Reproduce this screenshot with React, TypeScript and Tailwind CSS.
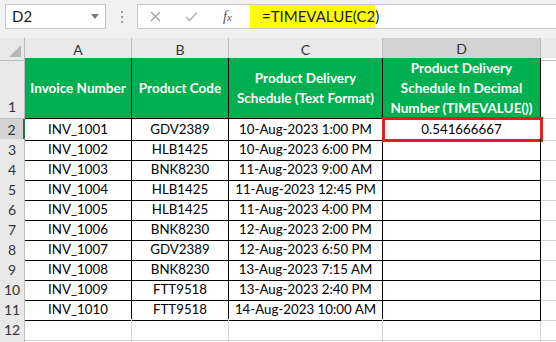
import React from "react";

const rows: [string, string, string][] = [
  ["INV_1001", "GDV2389", "10-Aug-2023 1:00 PM"],
  ["INV_1002", "HLB1425", "10-Aug-2023 6:00 PM"],
  ["INV_1003", "BNK8230", "11-Aug-2023 9:00 AM"],
  ["INV_1004", "HLB1425", "11-Aug-2023 12:45 PM"],
  ["INV_1005", "HLB1425", "11-Aug-2023 4:00 PM"],
  ["INV_1006", "BNK8230", "12-Aug-2023 2:00 PM"],
  ["INV_1007", "GDV2389", "12-Aug-2023 6:50 PM"],
  ["INV_1008", "BNK8230", "13-Aug-2023 7:15 AM"],
  ["INV_1009", "FTT9518", "13-Aug-2023 2:40 PM"],
  ["INV_1010", "FTT9518", "14-Aug-2023 10:00 AM"],
];

const font = { fontFamily: "Lato, 'Open Sans', sans-serif" };

export default function App() {
  const cols = "grid grid-cols-[25px_107px_97px_154px_158px_1fr]";
  return (
    <div className="w-[556px] h-[342px] overflow-hidden bg-white text-black" style={font}>
      {/* toolbar */}
      <div className="h-[38px] bg-[#f1f1f1] flex items-start pt-[4px]">
        <div className="ml-[5px] w-[101px] h-[25px] bg-white border border-[#c8c8c8] flex items-center justify-between pl-[6px] pr-[6px] text-[15px] text-[#222]">
          <span>D2</span>
          <svg width="8" height="5" viewBox="0 0 8 5"><path d="M0 0 L8 0 L4 5 Z" fill="#777" /></svg>
        </div>
        <div className="w-[31px] h-[25px] flex flex-col items-center justify-center gap-[3px]">
          <span className="w-[2px] h-[2px] bg-[#9a9a9a]" />
          <span className="w-[2px] h-[2px] bg-[#9a9a9a]" />
          <span className="w-[2px] h-[2px] bg-[#9a9a9a]" />
        </div>
        <div className="flex-1 h-[25px] bg-white border border-[#c8c8c8] border-r-0 flex items-stretch">
          <div className="w-[112px] flex items-center">
            <svg className="ml-[12px]" width="11" height="11" viewBox="0 0 11 11"><path d="M1 1 L10 10 M10 1 L1 10" stroke="#a0a0a0" strokeWidth="1.3" /></svg>
            <svg className="ml-[24px]" width="13" height="11" viewBox="0 0 13 11"><path d="M1 6 L4.5 9.5 L12 1.5" stroke="#b0b0b0" strokeWidth="1.4" fill="none" /></svg>
            <span className="ml-[25px] text-[14px] italic text-[#555]" style={{ fontFamily: "'Liberation Serif', serif" }}>f<span className="text-[11px]">x</span></span>
          </div>
          <div className="w-[125px] bg-[#ffff00] flex items-center pl-[12px] text-[15px] text-[#222]">=TIMEVALUE(C2)</div>
        </div>
      </div>

      {/* column header */}
      <div className={`${cols} h-[20px] bg-[#e9e9e9] text-[14px] text-[#333]`}>
        <div className="border-r border-b border-[#bdbdbd] relative">
          <svg className="absolute right-[3px] bottom-[3px]" width="12" height="12" viewBox="0 0 12 12"><path d="M12 0 L12 12 L0 12 Z" fill="#b8b8b8" /></svg>
        </div>
        {["A", "B", "C"].map((c) => (
          <div key={c} className="border-r border-b border-[#bdbdbd] flex items-center justify-center">{c}</div>
        ))}
        <div className="bg-[#d3d3d3] border-r border-[#bdbdbd] border-b-2 border-b-[#217346] flex items-center justify-center">D</div>
        <div className="border-b border-[#bdbdbd]" />
      </div>

      {/* row 1 */}
      <div className={`${cols} h-[61px]`}>
        <div className="bg-[#e9e9e9] border-r border-b border-[#bdbdbd] flex items-end justify-center pb-[1px] text-[14px] text-[#333]">1</div>
        <div className="bg-[#00b050] border-r border-b border-black flex items-center justify-center text-white font-bold text-[13.5px]">Invoice Number</div>
        <div className="bg-[#00b050] border-r border-b border-black flex items-center justify-center text-white font-bold text-[13.5px]">Product Code</div>
        <div className="bg-[#00b050] border-r border-b border-black flex items-center justify-center text-center text-white font-bold text-[13.5px] leading-[20px]">Product Delivery<br />Schedule (Text Format)</div>
        <div className="bg-[#00b050] border-r border-b border-black flex items-center justify-center text-center text-white font-bold text-[13.5px] leading-[20px]">Product Delivery<br />Schedule In Decimal<br />Number (TIMEVALUE())</div>
        <div className="border-b border-[#d4d4d4]" />
      </div>

      {rows.map((r, i) => (
        <div key={i} className={`${cols} h-[20px] text-[13.3px]`}>
          <div className={`${i === 0 ? "bg-[#d3d3d3] border-r-2 border-r-[#217346]" : "bg-[#e9e9e9] border-r border-[#bdbdbd]"} border-b border-b-[#bdbdbd] flex items-center justify-center text-[14px] text-[#333]`}>{i + 2}</div>
          <div className="border-r border-b border-black flex items-center justify-center leading-none">{r[0]}</div>
          <div className="border-r border-b border-black flex items-center justify-center leading-none">{r[1]}</div>
          <div className="border-r border-b border-black flex items-center justify-center leading-none">{r[2]}</div>
          <div className="border-r border-b border-black flex items-center justify-center leading-none relative">
            {i === 0 && (
              <>
                <div className="absolute left-[-1px] right-[-3px] top-[-2px] bottom-[-2px] border-[3px] border-[#e0201c]" />
                <span>0.541666667</span>
              </>
            )}
          </div>
          <div className="border-b border-[#d4d4d4]" />
        </div>
      ))}

      {[12, 13].map((n) => (
        <div key={n} className={`${cols} h-[20px] text-[14px]`}>
          <div className="bg-[#e9e9e9] border-r border-b border-[#bdbdbd] flex items-center justify-center text-[#333]">{n === 12 ? "12" : ""}</div>
          <div className="border-r border-b border-[#d4d4d4]" />
          <div className="border-r border-b border-[#d4d4d4]" />
          <div className="border-r border-b border-[#d4d4d4]" />
          <div className="border-r border-b border-[#d4d4d4]" />
          <div className="border-b border-[#d4d4d4]" />
        </div>
      ))}
    </div>
  );
}
